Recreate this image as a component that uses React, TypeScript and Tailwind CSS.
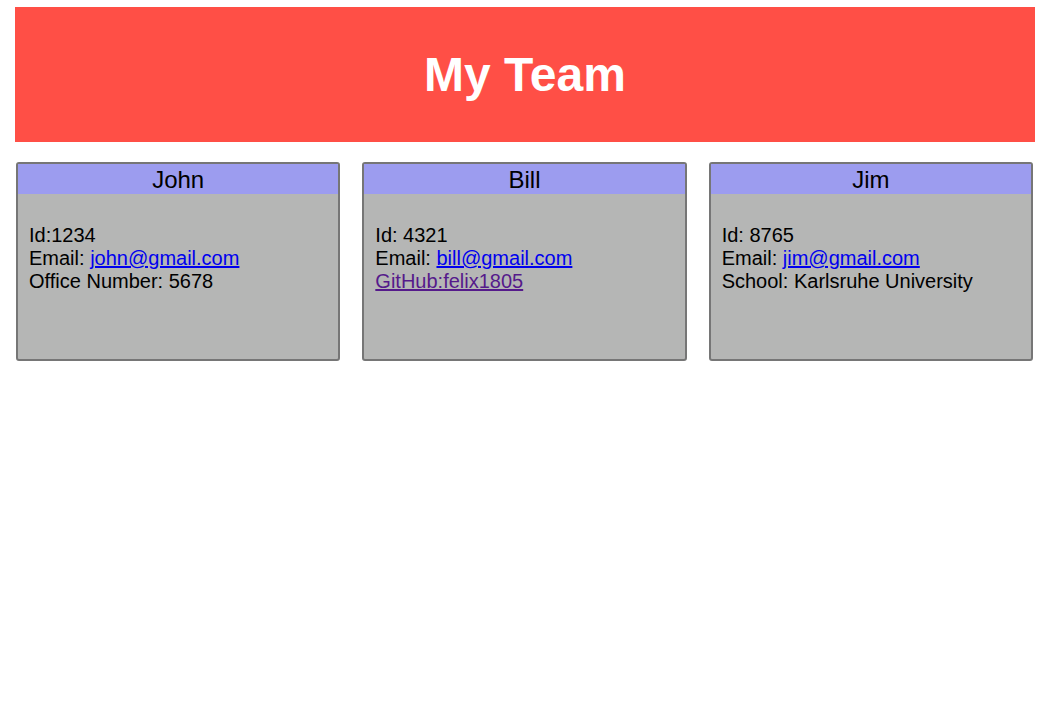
import React from 'react';

type Member = {
  name: string;
  id: string;
  email: string;
  extra: React.ReactNode;
};

const team: Member[] = [
  { name: 'John', id: 'Id:1234', email: 'john@gmail.com', extra: <span>Office Number: 5678</span> },
  {
    name: 'Bill',
    id: 'Id: 4321',
    email: 'bill@gmail.com',
    extra: (
      <a href="#" className="text-[#551a8b] underline">
        GitHub:felix1805
      </a>
    ),
  },
  { name: 'Jim', id: 'Id: 8765', email: 'jim@gmail.com', extra: <span>School: Karlsruhe University</span> },
];

const MemberCard: React.FC<{ member: Member }> = ({ member }) => (
  <div className="h-[199px] rounded-[3px] border-2 border-[#767676] bg-[#b5b6b5]">
    <div className="flex h-[30px] items-center justify-center bg-[#9c9cef] pt-[2px] text-[24px] text-black">
      {member.name}
    </div>
    <div className="flex flex-col px-[11px] pt-[30px] text-[20px] leading-[23px] text-black">
      <span>{member.id}</span>
      <span>
        Email:{' '}
        <a href="#" className="text-[#0000ee] underline">
          {member.email}
        </a>
      </span>
      {member.extra}
    </div>
  </div>
);

export default function App() {
  return (
    <div className="min-h-[711px] bg-white pt-[7px] font-['Liberation_Sans',Arial,sans-serif]">
      <header className="ml-[15px] mr-[16px] flex h-[135px] items-center justify-center bg-[#ff4f46]">
        <h1 className="text-[48px] font-bold text-white">My Team</h1>
      </header>

      <div className="ml-[16px] mr-[18px] mt-[20px] grid grid-cols-3 gap-[22px]">
        {team.map((m) => (
          <MemberCard key={m.name} member={m} />
        ))}
      </div>
    </div>
  );
}
